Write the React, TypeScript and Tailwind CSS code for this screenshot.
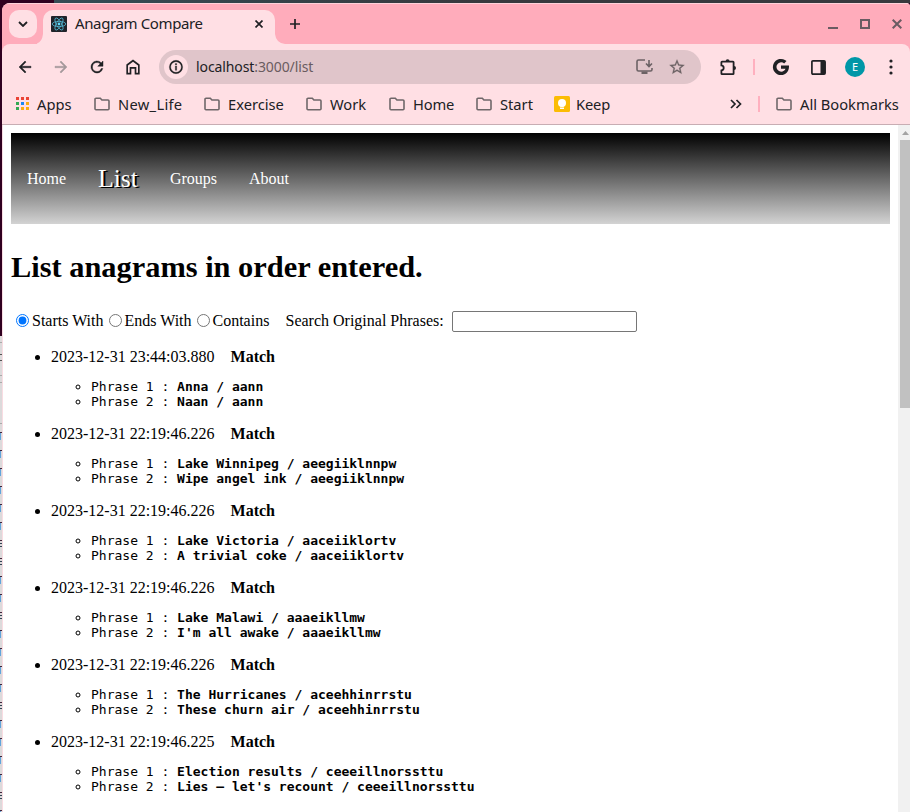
import React from "react";

const ui = "font-['Noto_Sans',sans-serif] whitespace-nowrap";

type IconProps = { children: React.ReactNode; size?: number; className?: string };

function Icon({ children, size = 20, className = "" }: IconProps) {
  return (
    <svg width={size} height={size} viewBox="0 0 24 24" fill="currentColor" className={`shrink-0 ${className}`}>
      {children}
    </svg>
  );
}

function Folder() {
  return (
    <svg width="16" height="14" viewBox="0 0 16 14" fill="none" stroke="#6f6769" strokeWidth="1.6" className="shrink-0">
      <path d="M2 1.2h4.3l1.6 1.8H14a1 1 0 0 1 1 1v7.8a1 1 0 0 1-1 1H2a1 1 0 0 1-1-1V2.2a1 1 0 0 1 1-1z" />
    </svg>
  );
}

function Bookmark({ label, className }: { label: string; className: string }) {
  return (
    <div className={`flex shrink-0 items-center gap-2 ${className}`}>
      <Folder />
      <span>{label}</span>
    </div>
  );
}

function ReactLogo() {
  return (
    <svg width="16" height="16" viewBox="0 0 16 16" className="shrink-0">
      <rect width="16" height="16" rx="1" fill="#20232a" />
      <g fill="none" stroke="#53b8d4" strokeWidth="0.8">
        <ellipse cx="8" cy="8" rx="6.8" ry="2.6" />
        <ellipse cx="8" cy="8" rx="6.8" ry="2.6" transform="rotate(60 8 8)" />
        <ellipse cx="8" cy="8" rx="6.8" ry="2.6" transform="rotate(120 8 8)" />
      </g>
      <circle cx="8" cy="8" r="1.4" fill="#61dafb" />
    </svg>
  );
}

function TabStrip() {
  return (
    <div className="flex h-10 shrink-0 bg-[#ffacbb] pl-[7px]">
      <div className="mt-1.5 flex h-7 w-7 items-center justify-center rounded-[10px] bg-[#ffdfe4] text-[#202124]">
        <svg width="10" height="6" viewBox="0 0 10 6" fill="none" stroke="currentColor" strokeWidth="1.8"><path d="M1 1l4 4 4-4" /></svg>
      </div>
      <svg width="6" height="40" viewBox="0 0 6 40" className="shrink-0"><path d="M6 30v10H0v-.5Q5 38 6 30z" fill="#ffdfe4" /></svg>
      <div className={`mt-1.5 flex h-[34px] w-[232px] items-center rounded-t-[10px] bg-[#ffdfe4] pb-1.5 pl-2 text-[#202124] ${ui}`}>
        <ReactLogo />
        <span className="mb-0.5 ml-2 w-[175px] text-[15px] tracking-[-0.38px]">Anagram Compare</span>
        <svg width="8" height="8" viewBox="0 0 8 8" stroke="currentColor" strokeWidth="1.7" className="ml-[5px]"><path d="M.5.5l7 7M7.5.5l-7 7" /></svg>
      </div>
      <svg width="10" height="40" viewBox="0 0 10 40" className="shrink-0"><path d="M0 30v10h10Q1 39 0 30z" fill="#ffdfe4" /></svg>
      <svg width="10" height="10" viewBox="0 0 10 10" stroke="#202124" strokeWidth="1.7" className="mt-[15px] ml-[5px]"><path d="M5 0v10M0 5h10" /></svg>
      <div className="mt-[14px] ml-auto flex items-start text-[#6a5b62]">
        <svg width="10" height="12" viewBox="0 0 10 12" fill="currentColor"><path d="M0 9h10v2H0z" /></svg>
        <svg width="10" height="10" viewBox="0 0 10 10" fill="none" stroke="currentColor" strokeWidth="2" className="mt-px ml-[22px]"><path d="M1 1h8v8H1z" /></svg>
        <svg width="10" height="10" viewBox="0 0 10 10" stroke="currentColor" strokeWidth="2" className="mt-px mr-2 ml-[22px]"><path d="M.7.7l8.6 8.6M9.3.7L.7 9.3" /></svg>
      </div>
    </div>
  );
}

function Toolbar() {
  return (
    <div className="h-[46px] shrink-0 bg-[#ffacbb]">
      <div className={`flex h-[46px] items-center rounded-t-lg bg-[#ffdfe4] pl-[14px] text-[#202124] ${ui}`}>
        <Icon size={18}><path d="M20 11H7.8l5.6-5.6L12 4l-8 8 8 8 1.4-1.4L7.8 13H20z" stroke="currentColor" strokeWidth=".6" /></Icon>
        <Icon size={18} className="ml-[18px] text-[#a4989b]"><path d="M4 11h12.2l-5.6-5.6L12 4l8 8-8 8-1.4-1.4 5.6-5.6H4z" stroke="currentColor" strokeWidth=".6" /></Icon>
        <Icon size={18} className="ml-[18px]"><path d="M17.65 6.35A8 8 0 1 0 19.73 14h-2.1A6 6 0 1 1 12 6c1.66 0 3.14.69 4.22 1.78L13 11h7V4z" stroke="currentColor" strokeWidth=".6" /></Icon>
        <Icon size={20} className="ml-[17px]"><path d="M12 3L4 9v12h6v-7h4v7h6V9zm0 2.7l6 4.5V19h-2v-7H8v7H6v-8.8z" /></Icon>
        <div className="ml-4 flex h-[34px] w-[542px] shrink-0 items-center rounded-full bg-[#e0c5ca] pl-[5px]">
          <div className="flex h-6 w-6 items-center justify-center rounded-full bg-[#ffdfe4]">
            <Icon size={16}><path d="M11 10.5h2V17h-2zm0-3.7h2v2.1h-2zM12 2a10 10 0 1 0 0 20 10 10 0 0 0 0-20zm0 18a8 8 0 1 1 0-16 8 8 0 0 1 0 16z" stroke="currentColor" strokeWidth=".5" /></Icon>
          </div>
          <span className="mb-0.5 ml-2 text-[14px] tracking-[-0.1px]">localhost<span className="text-[#6a5c60]">:3000/list</span></span>
          <div className="ml-auto flex items-center text-[#6c6265]">
            <svg width="18" height="16" viewBox="0 0 18 16" fill="none" stroke="currentColor" strokeWidth="1.6">
              <path d="M9 1H2.5Q1 1 1 2.5v8Q1 12 2.5 12h12q1.5 0 1.5-1.5V9M13 1v6M10 4.5l3 3 3-3" />
              <path d="M5.5 13.8h6" strokeWidth="2.4" />
            </svg>
            <Icon size={18} className="mr-[15px] ml-[14px]"><path d="M22 9.24l-7.19-.62L12 2 9.19 8.63 2 9.24l5.46 4.73L5.82 21 12 17.27 18.18 21l-1.63-7.03zM12 15.4l-3.76 2.27 1-4.28-3.32-2.88 4.38-.38L12 6.1l1.71 4.04 4.38.38-3.32 2.88 1 4.28z" stroke="currentColor" strokeWidth=".3" /></Icon>
          </div>
        </div>
        <svg width="17" height="17" viewBox="0 0 17 17" fill="none" stroke="currentColor" strokeWidth="1.8" className="ml-[19px] shrink-0">
          <path d="M2 2.6h11a.6.6 0 0 1 .6.6v11.4a.6.6 0 0 1-.6.6H2a.6.6 0 0 1-.6-.6v-3.2q2.3-.4 2.3-2.5T1.4 6.4V3.200q0-.6.6-.6z" />
          <path d="M5.600 2.200a2 2 0 0 1 4 0zM14 7a2 2 0 0 1 0 4z" fill="currentColor" stroke="none" />
        </svg>
        <div className="ml-4 h-4 w-0.5 bg-[#ffb0bf]" />
        <Icon size={20} className="ml-4"><path d="M21.6 10.2H12v4h5.4c-.8 2.2-2.7 3.4-5.3 3.4A5.6 5.6 0 1 1 15.8 7.7l2.8-2.8A9.7 9.7 0 1 0 12 21.7c5.6 0 10-4 9.6-11.5z" /></Icon>
        <svg width="15" height="15" viewBox="0 0 15 15" fill="none" stroke="currentColor" strokeWidth="1.7" className="ml-5 shrink-0"><rect x=".9" y=".9" width="13.2" height="13.2" rx="1" /><path d="M9.5 1h4.6v13H9.5z" fill="currentColor" stroke="none" /></svg>
        <div className="ml-[19px] flex h-5 w-5 shrink-0 items-center justify-center rounded-full bg-[#0097a7] text-[11px] text-white">E</div>
        <svg width="4" height="16" viewBox="0 0 4 16" fill="currentColor" className="ml-6 shrink-0"><circle cx="2" cy="2" r="1.6" /><circle cx="2" cy="8" r="1.6" /><circle cx="2" cy="14" r="1.6" /></svg>
      </div>
    </div>
  );
}

const appDots = ["bg-[#ea4335]", "bg-[#ea4335]", "bg-[#ea4335]", "bg-[#34a853]", "bg-[#1a88f2]", "bg-[#fbab0c]", "bg-[#34a853]", "bg-[#fbab0c]", "bg-[#fbab0c]"];

function Bookmarks() {
  return (
    <div className={`flex h-[35px] shrink-0 items-center border-b border-[#c8adb3] pb-[7px] pl-[14px] text-[14.700px] leading-5 text-[#202124] ${ui}`}>
      <div className="grid w-[13px] shrink-0 grid-cols-3 gap-0.5">
        {appDots.map((c, i) => <i key={i} className={`h-[3px] w-[3px] ${c}`} />)}
      </div>
      <span className="ml-2 w-[57px] shrink-0">Apps</span>
      <Bookmark label="New_Life" className="w-[110px] tracking-[0.3px]" />
      <Bookmark label="Exercise" className="w-[102px]" />
      <Bookmark label="Work" className="w-[83px]" />
      <Bookmark label="Home" className="w-[87px] tracking-[-0.15px]" />
      <Bookmark label="Start" className="w-[78px]" />
      <svg width="16" height="16" viewBox="0 0 16 16" className="shrink-0"><rect width="16" height="16" rx="1.5" fill="#fbbc04" /><circle cx="8" cy="7" r="4" fill="#fff" /><path d="M6 9h4v1.5H6zM6 11.5h4V13H6z" fill="#fff" /></svg>
      <span className="ml-1.5 w-[154px] shrink-0 tracking-[-0.15px]">Keep</span>
      <svg width="12" height="10" viewBox="0 0 12 10" fill="none" stroke="currentColor" strokeWidth="1.7" className="shrink-0"><path d="M1 1l4 4-4 4M6.5 1l4 4-4 4" /></svg>
      <div className="mr-4 ml-4 h-4 w-0.5 shrink-0 bg-[#ffb0bf]" />
      <Bookmark label="All Bookmarks" className="" />
    </div>
  );
}

type Entry = { at: string; phrases: [string, string] };

const entries: Entry[] = [
  { at: "2023-12-31 23:44:03.880", phrases: ["Anna / aann", "Naan / aann"] },
  { at: "2023-12-31 22:19:46.226", phrases: ["Lake Winnipeg / aeegiiklnnpw", "Wipe angel ink / aeegiiklnnpw"] },
  { at: "2023-12-31 22:19:46.226", phrases: ["Lake Victoria / aaceiiklortv", "A trivial coke / aaceiiklortv"] },
  { at: "2023-12-31 22:19:46.226", phrases: ["Lake Malawi / aaaeikllmw", "I'm all awake / aaaeikllmw"] },
  { at: "2023-12-31 22:19:46.226", phrases: ["The Hurricanes / aceehhinrrstu", "These churn air / aceehhinrrstu"] },
  { at: "2023-12-31 22:19:46.225", phrases: ["Election results / ceeeillnorssttu", "Lies – let's recount / ceeeillnorssttu"] },
];

function Page() {
  return (
    <div className="min-w-0 flex-1 pt-2 pr-2 pl-2 font-['Liberation_Serif',serif] text-[16px] leading-[18px] text-black">
      <nav className="flex h-[91px] items-center gap-8 bg-[linear-gradient(#000,#d3d3d3)] px-4 text-white">
        <span>Home</span>
        <span className="text-[25.6px] [text-shadow:2px_1px_black]">List</span>
        <span>Groups</span>
        <span>About</span>
      </nav>
      <h1 className="mt-[25px] text-[30.4px] leading-[36px] font-bold">List anagrams in order entered.</h1>
      <div className="mt-[26px] flex h-[21px] items-center whitespace-nowrap">
        <input type="radio" name="mode" defaultChecked className="mb-[3px] ml-[5px] h-[13px] w-[13px]" />
        <label className="mb-px ml-[3px] w-[77px]">Starts With</label>
        <input type="radio" name="mode" className="mb-[3px] h-[13px] w-[13px]" />
        <label className="mb-px ml-[2.5px] w-[72.5px]">Ends With</label>
        <input type="radio" name="mode" className="mb-[3px] h-[13px] w-[13px]" />
        <label className="mb-px ml-[2.5px] w-[73px]">Contains</label>
        <label className="mb-px w-[166.5px]">Search Original Phrases:</label>
        <input className="h-[21px] w-[185px] rounded-[2px] border border-[#767676] bg-white" />
      </div>
      <ul className="mt-4 list-disc pl-10">
        {entries.map((e, i) => (
          <li key={i} className="mb-4">
            {e.at}<b className="ml-4">Match</b>
            <ul className="mt-[13px] list-[circle] pl-10 font-['DejaVu_Sans_Mono',monospace] text-[13px] leading-[15px]">
              {e.phrases.map((p, n) => (
                <li key={n}>Phrase {n + 1} : <b>{p}</b></li>
              ))}
            </ul>
          </li>
        ))}
      </ul>
    </div>
  );
}

export default function App() {
  return (
    <div className="flex h-[812px] w-[910px] overflow-hidden bg-[#300020]">
      <div className="flex w-0.5 shrink-0 flex-col">
        <div className="h-[336px] shrink-0 bg-[#300020]" />
        <div className="h-24 shrink-0 bg-[#dcdadb] pt-1.5">
          <div className="h-px bg-[#aaa]" />
          <div className="mt-[11px] h-px bg-[#555]" />
          <div className="mt-[5px] h-px bg-[#555]" />
          <div className="mt-3.5 h-px bg-[#aaa]" />
          <div className="mt-1.5 h-px bg-[#aaa]" />
          <div className="mt-10 h-px bg-[#aaa]" />
        </div>
        {Array.from({ length: 22 }, (_, i) => (
          <div key={i} className="h-[18px] shrink-0 bg-[#dcdadb]">
            <div className="h-px bg-[#42263b]" />
            <div className={[6, 7, 10, 15, 20].includes(i) ? "mt-0.5 h-1 border-y border-[#345]" : "mr-px h-[7px] bg-[#62a4dc]"} />
          </div>
        ))}
      </div>
      <div className="flex min-w-0 flex-1 flex-col">
        <div className="flex h-[3px] shrink-0">
          <div className="w-[52px] bg-[#300020]" />
          <div className="flex-1 bg-linear-to-r from-[#344b55] to-[#38393e] to-50%" />
        </div>
        <div className="flex min-h-0 flex-1 flex-col overflow-hidden rounded-tl-lg rounded-tr-sm bg-[#ffdfe4]">
          <div className="h-px shrink-0 bg-[#ffd2da]" />
          <TabStrip />
          <Toolbar />
          <Bookmarks />
          <div className="flex min-h-0 flex-1 border-l border-[#f9dce2] bg-white">
            <Page />
            <div className="flex w-3 shrink-0 flex-col bg-[#f1f1f1] pl-0.5">
              <svg width="10" height="15" viewBox="0 0 10 15"><path d="M2 10l3.5-4L9 10z" fill="#a3a3a3" /></svg>
              <div className="h-[268px] bg-[#c1c1c1]" />
            </div>
          </div>
        </div>
      </div>
    </div>
  );
}
